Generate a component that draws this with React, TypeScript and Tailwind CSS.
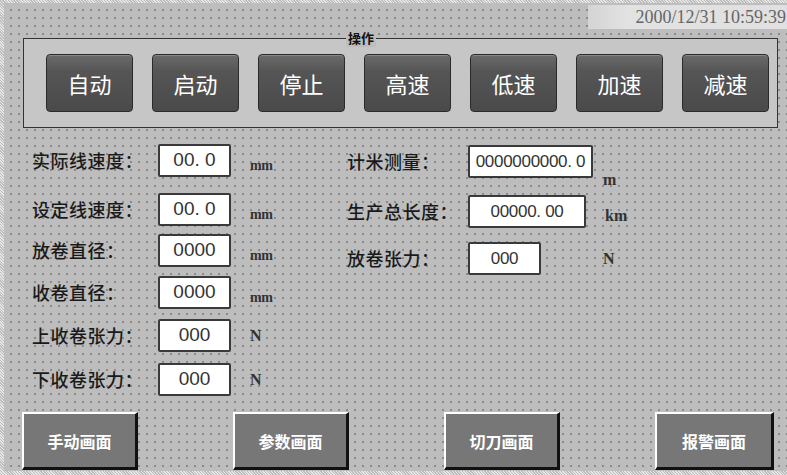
const topButtons = ["自动", "启动", "停止", "高速", "低速", "加速", "减速"];

const leftRows = [
  { label: "实际线速度：", value: "00. 0", unit: "mm", mt: "mt-[16px]" },
  { label: "设定线速度：", value: "00. 0", unit: "mm", mt: "mt-[16px]" },
  { label: "放卷直径：", value: "0000", unit: "mm", mt: "mt-[8px]" },
  { label: "收卷直径：", value: "0000", unit: "mm", mt: "mt-[9px]" },
  { label: "上收卷张力：", value: "000", unit: "N", mt: "mt-[10px]" },
  { label: "下收卷张力：", value: "000", unit: "N", mt: "mt-[11px]" },
];

const rightRows = [
  { label: "计米测量：", value: "0000000000. 0", unit: "m", w: "w-[125px]", mt: "mt-[17px]", unitPos: "mt-[22px]" },
  { label: "生产总长度：", value: "00000. 00", unit: "km", w: "w-[118px]", mt: "mt-[17px]", unitPos: "mt-[8px]" },
  { label: "放卷张力：", value: "000", unit: "N", w: "w-[73px]", mt: "mt-[14px]", unitPos: "mt-[4px]" },
];

const bottomButtons = ["手动画面", "参数画面", "切刀画面", "报警画面"];

const cjk = "font-['Noto_Sans_CJK_SC',sans-serif]";

function ValueBox({ value, w, small }: { value: string; w: string; small?: boolean }) {
  return (
    <div
      className={`${w} h-[33px] shrink-0 bg-white border-2 border-[#3a3a3a] rounded-[2px] flex items-center justify-center whitespace-pre font-['Liberation_Sans',sans-serif] text-[#333] ${small ? "text-[17px] tracking-[-0.3px]" : "text-[19px]"}`}
    >
      {value}
    </div>
  );
}

function Unit({ unit }: { unit: string }) {
  const isMm = unit === "mm";
  return (
    <span
      className={`font-['Liberation_Serif',serif] text-[#333] font-bold ${isMm ? "text-[14px] tracking-[-0.5px]" : "text-[16px]"}`}
    >
      {unit}
    </span>
  );
}

export default function App() {
  return (
    <div className="w-[787px] h-[475px] overflow-hidden bg-[repeating-linear-gradient(45deg,#e6e6e6_0px,#e6e6e6_1px,#bdbdbd_1px,#bdbdbd_2px)] pl-[4px] pt-[3px] pb-[4px]">
      <div className="w-full h-full flex flex-col bg-[#bdbdbd] bg-[radial-gradient(circle,#8a8a8a_0.8px,transparent_1px)] bg-[length:8px_8px] bg-[position:3px_3px]">
        {/* clock */}
        <div className="flex h-[35px] pt-[2px]">
          <div className="ml-auto w-[199px] h-[24px] bg-[linear-gradient(90deg,#d4d4d4,#e2e2e2_20%,#e0e0e0)] flex items-center justify-end pr-[1px]">
            <span className="font-['Liberation_Serif',serif] text-[18px] text-[#666] leading-none">
              2000/12/31 10:59:39
            </span>
          </div>
        </div>

        {/* 操作 group */}
        <div className="relative ml-[19px] w-[755px] h-[90px] border border-[#333] bg-[#c6c6c6] flex items-start gap-[19px] pl-[22px] pt-[15px]">
          <span
            className={`absolute top-[-10px] left-[322px] px-[2px] bg-[#bdbdbd] text-[13px] font-bold text-[#111] leading-[18px] ${cjk}`}
          >
            操作
          </span>
          {topButtons.map((b) => (
            <div
              key={b}
              className={`w-[87px] h-[58px] shrink-0 rounded-[4px] border border-[#2a2a2a] bg-[linear-gradient(180deg,#6a6a6a_0%,#555_30%,#4a4a4a_100%)] shadow-[inset_0_1px_0_#888] flex items-center justify-center text-white text-[22px] ${cjk}`}
            >
              {b}
            </div>
          ))}
        </div>

        {/* form */}
        <div className="flex">
          <div className="flex flex-col pl-[28px] w-[343px]">
            {leftRows.map((r) => (
              <div key={r.label} className={`flex items-center h-[33px] ${r.mt}`}>
                <span className={`w-[126px] text-[18px] font-medium text-[#1a1a1a] tracking-[0.5px] whitespace-nowrap ${cjk}`}>
                  {r.label}
                </span>
                <ValueBox value={r.value} w="w-[73px]" />
                <span className={`ml-[19px] ${r.unit === "mm" ? "mt-[6px]" : ""}`}>
                  <Unit unit={r.unit} />
                </span>
              </div>
            ))}
          </div>
          <div className="flex flex-col">
            {rightRows.map((r) => (
              <div key={r.label} className={`flex items-start h-[33px] ${r.mt}`}>
                <span className={`w-[121px] h-[33px] flex items-center text-[18px] font-medium text-[#1a1a1a] tracking-[0.5px] whitespace-nowrap ${cjk}`}>
                  {r.label}
                </span>
                <ValueBox value={r.value} w={r.w} small />
                <span className={`${r.unitPos} ${r.unit === "N" ? "ml-[62px]" : r.unit === "km" ? "ml-[19px]" : "ml-[10px]"}`}>
                  <Unit unit={r.unit} />
                </span>
              </div>
            ))}
          </div>
        </div>

        {/* navigation */}
        <div className="flex mt-auto mb-[1px] pl-[18px] gap-[95px]">
          {bottomButtons.map((b, i) => (
            <div
              key={b}
              className={`${i === 3 ? "w-[119px]" : "w-[116px]"} h-[58px] shrink-0 bg-[#777] border-t-2 border-l-2 border-white border-b-[3px] border-r-[3px] border-b-[#111] border-r-[#111] flex items-center justify-center text-white text-[16px] font-bold ${cjk}`}
            >
              {b}
            </div>
          ))}
        </div>
      </div>
    </div>
  );
}
